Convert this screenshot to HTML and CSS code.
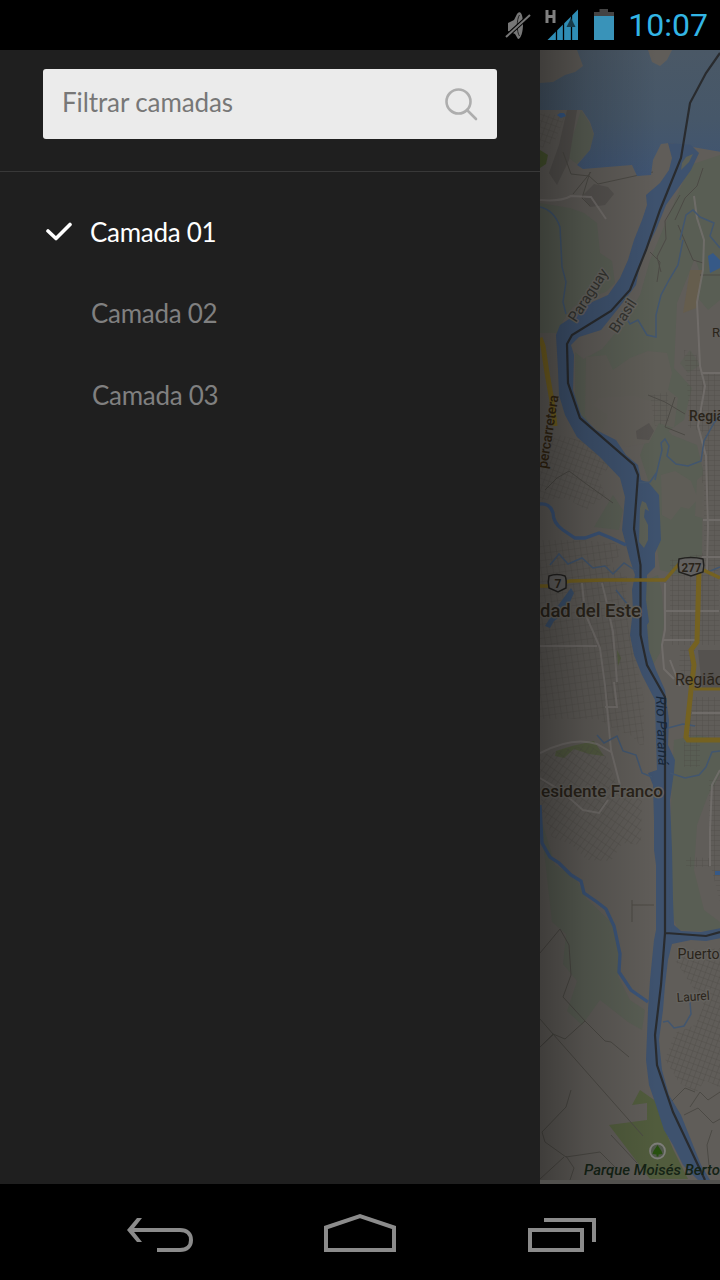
FILE: index.html
```html
<!DOCTYPE html>
<html lang="pt-BR">
<head>
<meta charset="utf-8">
<title>Camadas</title>
<link rel="stylesheet" href="styles.css">
</head>
<body>
<div class="phone">
  <header class="status">
    <svg class="status-icons" width="112" height="34" viewBox="503 8 112 34">
      <path fill="#777" d="M508 23l6-3 3-6c4-5 6 2 6 10s-2 15-5 15l-3-5-7-3z"/>
      <path fill="none" stroke="#222" stroke-width="1" d="M519.500 15c-3 4-3 17 0 21"/>
      <path stroke="#000" stroke-width="4" d="M507 36l24-22"/>
      <path stroke="#777" stroke-width="2" d="M506 37l24-22"/>
      <path fill="none" stroke="#808080" stroke-width="3" d="M547 10v13M554 10v13M547 16.500h7"/>
      <path fill="#2f8db5" d="M547.500 40L578 9.500V40z"/>
      <path stroke="#000" stroke-width="1.300" d="M556.500 28v13M563.500 22v19M571.500 14v27"/>
      <path fill="#173b4a" d="M571 18l4.500 9h-9z"/>
      <path fill="#444" d="M594 12h5.500V9h8.500v3h6v4h-20z"/>
      <path fill="#3993b9" d="M594 16h20v24h-20z"/>
    </svg>
    <time class="clock">10:07</time>
  </header>

  <div class="content">
    <aside class="drawer">
      <div class="search-area">
        <div class="search">
          <span class="search-label">Filtrar camadas</span>
          <svg class="search-icon" width="34" height="34" viewBox="0 0 34 34" fill="none" stroke="#adadad" stroke-width="2.600">
            <circle cx="14.500" cy="14.500" r="12"/><path stroke-linecap="round" d="M23 23l9 9"/>
          </svg>
        </div>
      </div>
      <ul class="layers">
        <li class="layer active">
          <svg class="check" width="28" height="20" viewBox="0 0 28 20"><path fill="none" stroke="#fff" stroke-width="3.600" stroke-linecap="round" stroke-linejoin="round" d="M3 9l8 7.500L25 2.500"/></svg>
          <span>Camada 01</span>
        </li>
        <li class="layer second"><span>Camada 02</span></li>
        <li class="layer third"><span>Camada 03</span></li>
      </ul>
    </aside>

    <svg class="map" width="180" height="1134" viewBox="540 50 180 1134">
      <defs>
        <pattern id="g1" width="6" height="7" patternUnits="userSpaceOnUse" patternTransform="rotate(-8)"><path class="grid" d="M0 0H6M0 0V7"/></pattern>
        <pattern id="g2" width="5" height="8" patternUnits="userSpaceOnUse" patternTransform="rotate(35)"><path class="grid" d="M0 0H5M0 0V8"/></pattern>
        <pattern id="g3" width="6" height="5" patternUnits="userSpaceOnUse"><path class="grid" d="M0 0H6M0 0V5"/></pattern>
        <pattern id="g4" width="5" height="6" patternUnits="userSpaceOnUse" patternTransform="rotate(20)"><path class="grid" d="M0 0H5M0 0V6"/></pattern>
        <linearGradient id="shade"><stop offset="0" stop-color="#000" stop-opacity=".34"/><stop offset=".25" stop-color="#000" stop-opacity=".16"/><stop offset=".65" stop-color="#000" stop-opacity="0"/></linearGradient>
        <linearGradient id="lake" x1="0" y1="0" x2="0" y2="1"><stop offset="0" stop-color="#4a5866"/><stop offset=".55" stop-color="#465769"/><stop offset="1" stop-color="#3f5472"/></linearGradient>
      </defs>
      <path fill="#605d59" d="M540 50h180v1134H540z"/>

      <!-- vegetation -->
      <g fill="#595e54">
        <path d="M581 110l9 14 4 12-5 15-12 13-11-8 7-20zM540 203l30 5 14 5 13 10 3 30 12 8 3 22-9 9-15 5-18 10-10 14-4 12H540z"/>
        <path d="M690 165l30-10v145l-12 10-10-12 2-25-5-15-18 45-3 65 18 20-8 32-17 12-12-10 4-18-25-8-35 2-7 10-15-2-2-20 5-25 22-12 20-24 18-30 10-35zM575 352l12 10-4 25 10 18 15 10-6 18-13-5-14-20zM655 415l17 20 25 10 6 25-1 85-22 20-20-5-4-30 2-40-10-20-8-25z"/>
        <path d="M646 580l12-5 4 18 2 30-4 30-8 14-6-20zM613 495l10 15-4 20-25-3zM674 740l24-5 22 5v35l-12 20-11 30-3 45 10 40 16 12v10l-42-2-7-18-1-60 2-75z"/>
        <path d="M540 815l15 50 20 12 12 22 26 25 8 40-3 12 12 24 15 10-3 20-14-8-28-22-18 25-15-14 10-30-14-17 3-30-14-12z"/>
        <path d="M690 350l10 15-12 8-8-10z" opacity=".6"/>
      </g>
      <g fill="#605d58"><path d="M586 357l20-2 7 15 17-12 18-7 19 2 5 20-4 17 10 8-4 30-15-5-10 20-25 4-12-12-20-5-7-15zM661 475l14-4 16 10 7 18-9 10-8-2-10 13-9-5zM697 480l12-10v50l-14-4z" opacity=".85"/></g>
      <path fill="#55524f" d="M636 431l13-8 5 8-5 9-12-1zM594 184l14 3 6 7-9 11-15 2-8-11zM698 650h22v38h-18zM567 110h10l-8 50-12 25-8-12 10-28z"/>
      <path fill="#655d4d" d="M690 270h13l-7 38-13 5z"/>
      <path fill="#48552f" d="M540 150l8 5-2 9-6 4z"/>
      <path fill="#515c3d" d="M609 1125l38-5V1103l-15 2 8-15 17 12 7 25 9 22 15 30h-38z"/>
      <path fill="#4f5b38" opacity=".7" d="M556 751l16-5 22-5 10 15-15-2-15-5-10 9-9-2zM617 650l4 8-3 8z"/>

      <!-- street grids -->
      <path fill="url(#g4)" opacity=".65" d="M540 113l25 3-10 25-15 8zM558 435l30 7 23 24-13 12 8 17-20 15-20-12-26 2V450z"/>
      <path fill="url(#g1)" opacity=".65" d="M540 540l40 0 35 3 7 10-12 12 17 12-1 25 3 28 7 30 8 40v50l-12-14-18-7-16-10H540V590z"/>
      <path fill="url(#g2)" opacity=".75" d="M540 755l48-10 17 10 12 28 25 12-1 50-18-2-12 18-24-1-15-15-20-8-10-25-2-30z"/>
      <path fill="url(#g3)" opacity=".7" d="M684 350l12 3 5 20h19v110h-18l3-50-17-6v-30zM704 480h16v90h-16zM670 560l48-10 2 95h-50zM680 650h15l-3 47-13-30zM690 697h30v42H687zM684 742h16v25h-16zM709 780h11v122l-9-35h-25v-10l23 1zM650 395l18-3 1 30-14 4z"/>
      <path fill="url(#g4)" opacity=".8" d="M675 960l18-10 27-2v140l-15-8-8 12-18-9-14-24 10-26 20-8 9-20z"/>
      <g class="roads">
        <path d="M563 152l8 22 18 2 9 8 55-12M573 194l18-22M590 172l-8 26 8 8M703 168l-6 18-12 12-10 22M680 195l-15 26 1 18-9 18 4 15"/>
        <path d="M540 953l20-24 9 16 2 30-8 22 22 24-20 18-12-5-14 14M540 1019l13 15 90 102M554 1034l-14 13M585 1021l20 20 6 1 18 15M571 1090l-5 17-24 25 3 10 21 15 34-5 17 17M564 1157l-24 22M566 1156l8 12-4 12M611 1135l26 28M632 900v22M632 905h22M545 490l12-12 12-7 16 12 28 20M675 397l-10 30 20 8M648 395l17 7 20 12"/>
        <path d="M670 1103l15-15 10 4M690 1107l10-15 8 8 12-8M684 1115l14-7 15 15 7-4M712 1130l-5 15 2 20"/>
        <path d="M678 225l15 35 10 3M650 252l10 10-3 20M700 275h20"/>
      </g>
      <g fill="none" stroke="#75716f" stroke-width="2" opacity=".75">
        <path d="M540 200q20 2 31-4l20 1 15 22M694 196l3 22 7 22-1 30-6 32 3 64 5 20-7 40 8 30 2 70-1 45M701 373h19M703 520h17M702 557h18M540 646h57M582 583l3 30 15 35 5 37 6 65 9 35M602 583l3 12 8 37 4 50M540 753q33-17 57-9l14 8M540 778l20 12 23 20 16 3 9-13M665 583v47l-3 15 2 24 10 10M665 611h54M663 640h35M670 660l10 26M720 770l-8 15-2 45v36M692 713h28M605 707h12l-3-25"/>
      </g>

      <!-- water -->
      <path fill="url(#lake)" d="M577 50l6 16-8 6-10 3-12 7-13 1v27h42l8 12 4 12-4 16-13 15 6 4 49-4 5 11 14-1 2-15 8-16 8-1 52 9V50H672l-5 10-7 6-8-4-4-12z"/>
      <path fill="#3e526e" d="M668 143l4 15-3 12-9 13-14 12 1 10-5 15-8 20-6 20-8 18-12 17-18 8-15 12-15 10-4 10 2 35 1 25 6 20 12 22 23 20 20 21 5 19-3 33 4 15 4 15 5 15-3 15 1 20-3 25 4 20 8 20 13 25 1 40 1 30-9 3 5 12 1 35v30l4 30v40l-4 20-4 40-2 30-2 50 3 25 7 20 8 25 9 15 10 20 15 15h12l-9-15-10-25-10-25-12-20-7-25-3-30 4-30 2-25 3-25 4-16 19-4 15 1 15-3v-10l-20 4-20-1-7-6-1-25-1-50-2-50 4-28 1-12-7-15 1-25-4-30-9-20-7-20-2-25 2-3-3-22 1-25 8-8v-14l6-13-2-45-10-12-8-3-3-15-12-10-10-15-20-10-15-15-8-25 1-35-3-10 8-8 22-7 20-25 15-20 5-25 15-30 10-25 25-35 8-17-8-8z"/>
      <path fill="#3e526e" d="M656 840l12 0 2 80 2 12-16 8z"/>
      <path fill="#5b5f56" d="M640 508l2-7 4 2 3 8-4-2-1 8 4 8v15l-4 8-5-6zM682 163l4-6 7-3-4 8-8 8z"/>
      <g fill="none" stroke="#3b5478" stroke-width="3.300"><path d="M540 504q10-1 13 9 0 10 10 17l12 8h10l14-5 12 5 15 7M540 805l2 38 8 14 9 6 12 12 10 6 3 12 13 9 9 7 8 17 6 28-1 18 12 18 17 12"/></g>
      <g fill="none" stroke="#42566f" stroke-width="1.500"><path d="M540 207q14 3 20 20l2 40 4 15-3 20 3 12M683 240l-5 25-9 15-8 15-5 20v22l-9-2-9-15-8 4-8-13M680 240l6-25 7-5 7 7 14 6-4 13 10 12M655 480l7-30-1-7 4-4 4 7-2 10 9 8 12 2 13-5 3-20 10-18 6-8M636 483l14-1 7-10M550 565l9-11 9 10 14-6 11 10 12-2 8 8 11-11 12 8M616 590l12 15M597 735l7 8 13-7 6 15 13 4 6 18 10 4M670 773l15 5 14-3 7-8 6-15 8-1M663 1022l5-1 6 7 10-2 7-12-1-12M668 728l15-4 12 2M720 567l-12 5"/></g>
      <path fill="#365987" d="M708 256l5-3 7 7v8l-10 5zM557 115l3-2h4l2 3-5 2zM715 871h5v4h-5z"/>
      <path fill="#3c526e" d="M571 588l3 5-9 20-11 8-4 7-5-2 12-19z"/>
      <path fill="none" stroke="#292b2e" stroke-width="2.200" d="M720 53l-14 20-16 30-9 55-21 52-14 40-16 40-19 21-39 24-5 9 1 39 12 35 54 47 4 10-4 54 6.500 36v70l6.500 30 18 32v236l-4 52-6 50 2 30 16 47 32 68M666 933l40 3 14-4"/>

      <!-- main roads -->
      <g fill="none" stroke="#756221" stroke-width="5"><path stroke-width="5" d="M540 338l3 8 4 27 5 28 3 25"/><path stroke-width="3.400" d="M540 586h10l20-5 35-1 60 0 14-16 20 4 21 10"/><path d="M699 570l-2 72-6 8 3 15-3 25-5 47 2 3h32"/><path stroke-width="3" d="M694 689h26"/></g>

      <!-- labels -->
      <g class="labels">
        <text class="halo" font-size="15" transform="translate(576 323) rotate(-57)" textLength="60" lengthAdjust="spacingAndGlyphs" fill="#33332f">Paraguay</text>
        <text class="halo" font-size="15" transform="translate(617 334) rotate(-57)" textLength="37" lengthAdjust="spacingAndGlyphs" fill="#33332f">Brasil</text>
        <text font-size="14" font-weight="500" transform="translate(547 469) rotate(-81)" textLength="74" lengthAdjust="spacingAndGlyphs" fill="#332612">percarretera</text>
        <text x="712" y="337" font-size="13">R</text>
        <text x="689" y="421" font-size="14" font-weight="500" textLength="35" lengthAdjust="spacingAndGlyphs">Regiã</text>
        <text class="halo" x="540" y="617" font-size="18.500" font-weight="500" textLength="101" lengthAdjust="spacingAndGlyphs">dad del Este</text>
        <text x="675" y="685" font-size="17" textLength="49" lengthAdjust="spacingAndGlyphs">Região</text>
        <text class="halo" x="541" y="797" font-size="17" font-weight="500" textLength="122" lengthAdjust="spacingAndGlyphs">esidente Franco</text>
        <text font-size="14" font-style="italic" transform="translate(656 696) rotate(88)" textLength="70" lengthAdjust="spacingAndGlyphs" fill="#172638">Rio Paraná</text>
        <text class="halo" x="677.500" y="959" font-size="14.500" textLength="42" lengthAdjust="spacingAndGlyphs">Puerto</text>
        <text class="halo" font-size="12.500" transform="translate(677 1002) rotate(-4)" textLength="33" lengthAdjust="spacingAndGlyphs">Laurel</text>
        <g fill="#626160" stroke="#22211f" stroke-width="1.500"><path d="M549 576q8-3 16 0c2 4 1 8 1 12l-8 4-9-4c-1-5-1-8 0-12zM679 559q12-3 24 0c1 4 1 9 0 13l-12 4-12-4c-1-5-1-9 0-13z"/></g>
        <text x="554.500" y="588" font-size="12" font-weight="700">7</text>
        <text x="681.500" y="571.500" font-size="12.500" font-weight="700" textLength="20" lengthAdjust="spacingAndGlyphs">277</text>
        <circle cx="657.500" cy="1151" r="7.500" fill="#51594b" stroke="#7d7d79" stroke-width="1.800"/>
        <path fill="#285010" d="M657.500 1145l4 6 1 3-4 .5v2h-2v-2l-4-.5 1-3z"/>
        <text x="584" y="1175" font-size="14.500" font-style="italic" font-weight="500" textLength="136" lengthAdjust="spacingAndGlyphs" fill="#142315">Parque Moisés Berto</text>
      </g>
      <path fill="url(#shade)" d="M540 50h180v1134H540z"/>
      <path fill="#51504d" d="M540 1180h180v4H540z"/>
    </svg>
  </div>

  <nav class="navbar">
    <svg width="720" height="96" viewBox="0 1184 720 96" fill="none" stroke="#8b8b8b" stroke-width="4">
      <path d="M130 1230h50c7 0 11 4 11 10s-4 10-11 10h-23"/><path fill="#8b8b8b" stroke="none" d="M137 1218h5l-9.500 12 9.500 12h-5l-10-12z"/>
      <path d="M326 1250v-22.500l34-11.300 34 11.300v22.500z"/>
      <path d="M530 1230h52v20h-52zM544 1220h50v22"/>
    </svg>
  </nav>
</div>
</body>
</html>
```
FILE: styles.css
```css
body { margin: 0; background: #000; font-family: Lato, sans-serif; }
.phone { width: 720px; height: 1280px; display: flex; flex-direction: column; overflow: hidden; }
.status { box-sizing: border-box; height: 50px; padding: 0 12px 0 0; display: flex; align-items: center; justify-content: flex-end; gap: 13px; background: #000; }
.status-icons { display: block; }
.clock { font: 400 32px/50px Roboto, sans-serif; color: #33b5e5; }
.content { height: 1134px; display: flex; }
.drawer { width: 540px; background: #1f1f1f; }
.search-area { box-sizing: border-box; height: 122px; padding: 19px 43px 0; border-bottom: 1px solid #383838; }
.search { box-sizing: border-box; height: 70px; padding: 0 19px; display: flex; justify-content: space-between; align-items: center; background: #ebebeb; border-radius: 3px; }
.search-label { font-size: 26px; line-height: 32px; letter-spacing: -.1px; color: #777; padding-bottom: 5px; }
.search-icon { display: block; }
.layers { list-style: none; margin: 0; padding: 19px 0 0 45px; }
.layer { height: 81.500px; display: flex; align-items: center; font-size: 26px; letter-spacing: -.3px; color: #808080; padding-left: 46px; }
.layer.active { color: #fff; padding-left: 0; gap: 17px; }
.layer.third { padding-left: 47px; }
.map { display: block; font-family: Roboto, sans-serif; }
.grid { fill: none; stroke: #4b4943; stroke-width: .8; }
.roads { fill: none; stroke: #4c4a45; stroke-width: 1; }
.labels { fill: #2a241a; }
.halo { paint-order: stroke; stroke: #64625e; stroke-width: 3px; stroke-linejoin: round; }
.navbar { height: 96px; background: #000; }
.navbar svg { display: block; }
```
